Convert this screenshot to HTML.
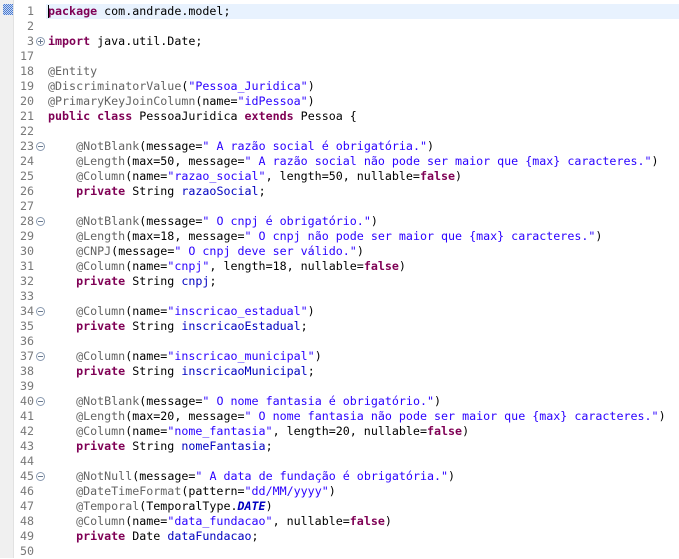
<!DOCTYPE html>
<html><head><meta charset="utf-8"><style>
html,body{margin:0;padding:0;width:679px;height:558px;overflow:hidden;background:#fff;}
.strip{position:absolute;left:0;top:0;width:13px;height:558px;background:#f0f0f0;border-right:1px solid #e2e2e2;}
.ico{position:absolute;left:3px;top:4px;width:10px;height:11px;background:repeating-conic-gradient(#4a7bd0 0 25%,#c8d8f4 0 50%) 0 0/2px 2px;}
.hl{position:absolute;left:46px;top:4px;width:633px;height:15px;background:#e8f2fe;}
.caret{position:absolute;left:48px;top:5px;width:1px;height:13px;background:#000;}
.nums{position:absolute;left:14px;top:4px;width:20px;text-align:right;}
.code{position:absolute;left:48px;top:4px;}
.l{height:15px;line-height:15px;white-space:pre;font-family:"DejaVu Sans Mono","Liberation Mono",monospace;font-size:11.67px;color:#000;}
.nums .l{color:#787878;}
.k{color:#7f0055;font-weight:bold;}
.s{color:#2a00ff;}
.a{color:#646464;}
.f{color:#0000c0;}
.fi{color:#0000c0;font-weight:bold;font-style:italic;}
.fold{position:absolute;left:36px;width:7px;height:7px;border:1px solid #8a9ab0;border-radius:50%;font-size:0;}
.fold:after{content:"";position:absolute;left:1px;top:3px;width:5px;height:1px;background:#6a7a90;}
.plus:before{content:"";position:absolute;left:3px;top:1px;width:1px;height:5px;background:#6a7a90;}
</style></head><body>
<div class="strip"><div class="ico"></div></div>
<div class="hl"></div>
<div class="nums">
<div class="l">1</div><div class="l">2</div><div class="l">3</div><div class="l">17</div><div class="l">18</div><div class="l">19</div><div class="l">20</div><div class="l">21</div><div class="l">22</div><div class="l">23</div><div class="l">24</div><div class="l">25</div><div class="l">26</div><div class="l">27</div><div class="l">28</div><div class="l">29</div><div class="l">30</div><div class="l">31</div><div class="l">32</div><div class="l">33</div><div class="l">34</div><div class="l">35</div><div class="l">36</div><div class="l">37</div><div class="l">38</div><div class="l">39</div><div class="l">40</div><div class="l">41</div><div class="l">42</div><div class="l">43</div><div class="l">44</div><div class="l">45</div><div class="l">46</div><div class="l">47</div><div class="l">48</div><div class="l">49</div><div class="l">50</div>
</div>
<div class="fold plus" style="top:37px"></div>
<div class="fold" style="top:142px"></div>
<div class="fold" style="top:217px"></div>
<div class="fold" style="top:307px"></div>
<div class="fold" style="top:352px"></div>
<div class="fold" style="top:397px"></div>
<div class="fold" style="top:472px"></div>
<div class="code">
<div class="l"><span class="k">package</span> com.andrade.model;</div>
<div class="l"> </div>
<div class="l"><span class="k">import</span> java.util.Date;</div>
<div class="l"> </div>
<div class="l"><span class="a">@Entity</span></div>
<div class="l"><span class="a">@DiscriminatorValue</span>(<span class="s">"Pessoa_Juridica"</span>)</div>
<div class="l"><span class="a">@PrimaryKeyJoinColumn</span>(name=<span class="s">"idPessoa"</span>)</div>
<div class="l"><span class="k">public</span> <span class="k">class</span> PessoaJuridica <span class="k">extends</span> Pessoa {</div>
<div class="l"> </div>
<div class="l">    <span class="a">@NotBlank</span>(message=<span class="s">" A razão social é obrigatória."</span>)</div>
<div class="l">    <span class="a">@Length</span>(max=50, message=<span class="s">" A razão social não pode ser maior que {max} caracteres."</span>)</div>
<div class="l">    <span class="a">@Column</span>(name=<span class="s">"razao_social"</span>, length=50, nullable=<span class="k">false</span>)</div>
<div class="l">    <span class="k">private</span> String <span class="f">razaoSocial</span>;</div>
<div class="l"> </div>
<div class="l">    <span class="a">@NotBlank</span>(message=<span class="s">" O cnpj é obrigatório."</span>)</div>
<div class="l">    <span class="a">@Length</span>(max=18, message=<span class="s">" O cnpj não pode ser maior que {max} caracteres."</span>)</div>
<div class="l">    <span class="a">@CNPJ</span>(message=<span class="s">" O cnpj deve ser válido."</span>)</div>
<div class="l">    <span class="a">@Column</span>(name=<span class="s">"cnpj"</span>, length=18, nullable=<span class="k">false</span>)</div>
<div class="l">    <span class="k">private</span> String <span class="f">cnpj</span>;</div>
<div class="l"> </div>
<div class="l">    <span class="a">@Column</span>(name=<span class="s">"inscricao_estadual"</span>)</div>
<div class="l">    <span class="k">private</span> String <span class="f">inscricaoEstadual</span>;</div>
<div class="l"> </div>
<div class="l">    <span class="a">@Column</span>(name=<span class="s">"inscricao_municipal"</span>)</div>
<div class="l">    <span class="k">private</span> String <span class="f">inscricaoMunicipal</span>;</div>
<div class="l"> </div>
<div class="l">    <span class="a">@NotBlank</span>(message=<span class="s">" O nome fantasia é obrigatório."</span>)</div>
<div class="l">    <span class="a">@Length</span>(max=20, message=<span class="s">" O nome fantasia não pode ser maior que {max} caracteres."</span>)</div>
<div class="l">    <span class="a">@Column</span>(name=<span class="s">"nome_fantasia"</span>, length=20, nullable=<span class="k">false</span>)</div>
<div class="l">    <span class="k">private</span> String <span class="f">nomeFantasia</span>;</div>
<div class="l"> </div>
<div class="l">    <span class="a">@NotNull</span>(message=<span class="s">" A data de fundação é obrigatória."</span>)</div>
<div class="l">    <span class="a">@DateTimeFormat</span>(pattern=<span class="s">"dd/MM/yyyy"</span>)</div>
<div class="l">    <span class="a">@Temporal</span>(TemporalType.<span class="fi">DATE</span>)</div>
<div class="l">    <span class="a">@Column</span>(name=<span class="s">"data_fundacao"</span>, nullable=<span class="k">false</span>)</div>
<div class="l">    <span class="k">private</span> Date <span class="f">dataFundacao</span>;</div>
<div class="l"> </div>
</div>
<div class="caret"></div>
</body></html>
